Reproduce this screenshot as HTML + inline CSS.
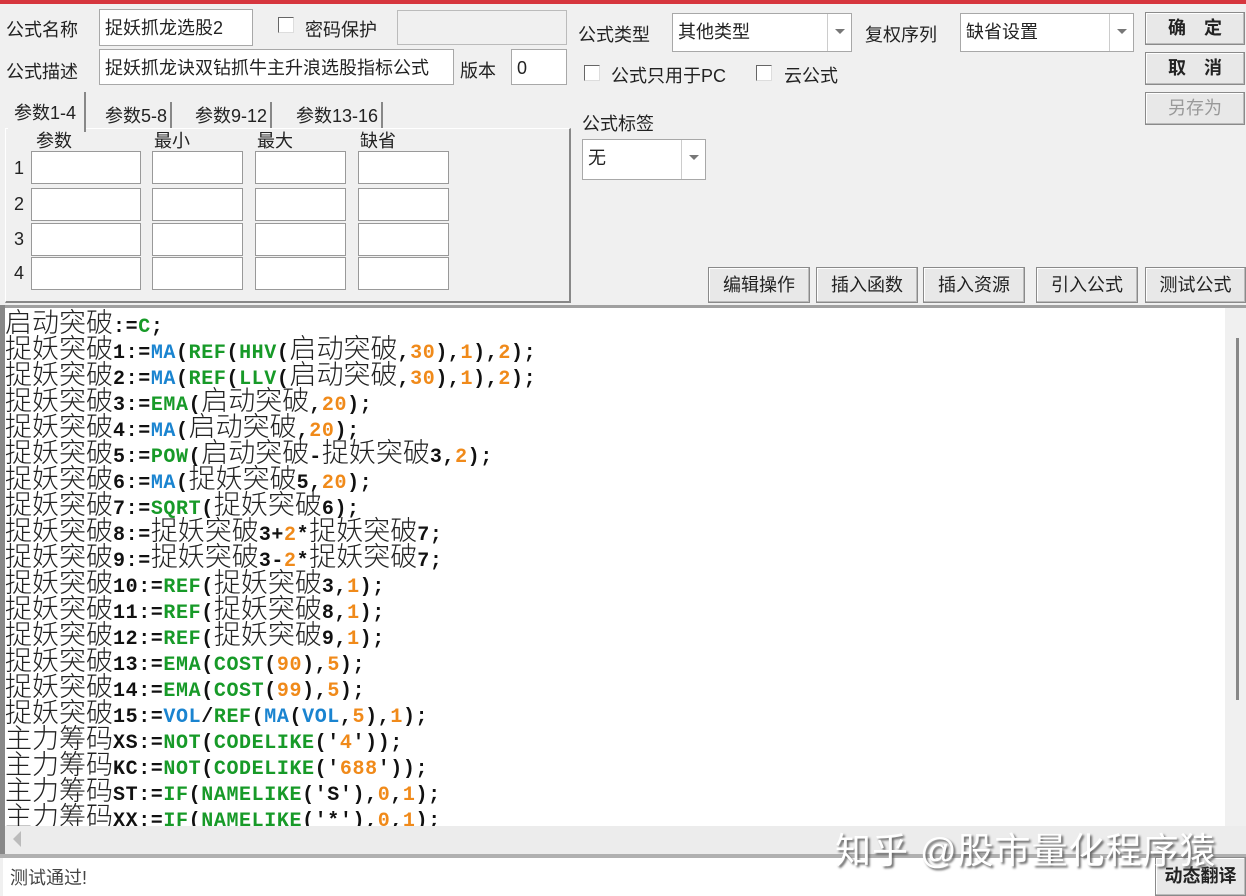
<!DOCTYPE html>
<html><head><meta charset="utf-8"><style>
*{margin:0;padding:0;box-sizing:border-box}
body{width:1246px;height:896px;background:#f0f0f0;font-family:"Liberation Sans","Noto Sans CJK SC",sans-serif;font-size:18px;color:#222;position:relative;overflow:hidden}
.a{position:absolute}
.inp{position:absolute;background:#fff;border:1px solid #a8a8a8;font-size:18px;padding:2px 5px;white-space:nowrap;overflow:hidden;line-height:32px}
.lbl{position:absolute;font-size:18px;white-space:nowrap}
.cb{position:absolute;width:16px;height:16px;border:1px solid #666;background:#fff;border-right-color:#ddd;border-bottom-color:#ddd}
.btn{position:absolute;background:#e8e8e8;border:1px solid #8a8a8a;box-shadow:inset -1px -1px 0 #bbb,inset 1px 1px 0 #fff;text-align:center;font-size:18px;white-space:nowrap}
.dd{position:absolute;right:0;top:0;bottom:0;width:24px;border-left:1px solid #ccc}
.dd:after{content:"";position:absolute;left:7px;top:15px;border:5px solid transparent;border-top:5px solid #777}
.cell{position:absolute;background:#fff;border:1px solid #999;height:33px}
#code{position:absolute;left:5px;top:308px;width:1220px;height:518px;background:#fff;overflow:hidden}
.ln{height:26px;line-height:26px;white-space:nowrap;font-size:27px;font-family:"Noto Sans CJK SC",sans-serif;font-weight:300;color:#222}
.ln b{font-family:"Liberation Mono",monospace;font-size:20px;font-weight:bold;letter-spacing:0.6px;color:#111}
.ln .bl{color:#1a84d0}.ln .g{color:#179a28}.ln .o{color:#f08a1a}
</style></head><body>
<div class="a" style="left:0;top:0;width:1246px;height:4px;background:#d6363e"></div>
<div class="lbl" style="left:6px;top:16px">公式名称</div>
<div class="inp" style="left:99px;top:9px;width:154px;height:37px">捉妖抓龙选股2</div>
<div class="cb" style="left:278px;top:17px"></div>
<div class="lbl" style="left:305px;top:16px">密码保护</div>
<div class="a" style="left:397px;top:10px;width:170px;height:35px;border:1px solid #bbb"></div>
<div class="lbl" style="left:6px;top:58px">公式描述</div>
<div class="inp" style="left:99px;top:49px;width:355px;height:36px">捉妖抓龙诀双钻抓牛主升浪选股指标公式</div>
<div class="lbl" style="left:460px;top:57px">版本</div>
<div class="inp" style="left:511px;top:49px;width:56px;height:36px">0</div>
<div class="lbl" style="left:578px;top:21px">公式类型</div>
<div class="inp" style="left:672px;top:13px;width:180px;height:39px">其他类型<div class="dd"></div></div>
<div class="lbl" style="left:865px;top:21px">复权序列</div>
<div class="inp" style="left:960px;top:13px;width:174px;height:39px">缺省设置<div class="dd"></div></div>
<div class="btn" style="left:1145px;top:12px;width:100px;height:33px;line-height:31px;font-weight:bold">确　定</div>
<div class="btn" style="left:1145px;top:52px;width:100px;height:33px;line-height:31px;font-weight:bold">取　消</div>
<div class="btn" style="left:1145px;top:92px;width:100px;height:33px;line-height:31px;color:#999">另存为</div>
<div class="cb" style="left:584px;top:65px"></div>
<div class="lbl" style="left:611px;top:62px">公式只用于PC</div>
<div class="cb" style="left:756px;top:65px"></div>
<div class="lbl" style="left:784px;top:62px">云公式</div>
<div class="lbl" style="left:582px;top:110px">公式标签</div>
<div class="inp" style="left:582px;top:139px;width:124px;height:41px">无<div class="dd"></div></div>
<div class="a" style="left:5px;top:128px;width:566px;height:175px;border:1px solid #fff;border-right:2px solid #888;border-bottom:2px solid #888"></div>
<div class="a" style="left:8px;top:92px;width:78px;height:40px;background:#f0f0f0;border-right:2px solid #888"></div>
<div class="lbl" style="left:14px;top:99px">参数1-4</div>
<div class="lbl" style="left:105px;top:102px;border-right:2px solid #888;padding-right:3px">参数5-8</div>
<div class="lbl" style="left:195px;top:102px;border-right:2px solid #888;padding-right:3px">参数9-12</div>
<div class="lbl" style="left:296px;top:102px;border-right:2px solid #888;padding-right:3px">参数13-16</div>
<div class="lbl" style="left:36px;top:127px">参数</div>
<div class="lbl" style="left:154px;top:127px">最小</div>
<div class="lbl" style="left:257px;top:127px">最大</div>
<div class="lbl" style="left:360px;top:127px">缺省</div>
<div class="lbl" style="left:14px;top:158px">1</div><div class="lbl" style="left:14px;top:194px">2</div><div class="lbl" style="left:14px;top:229px">3</div><div class="lbl" style="left:14px;top:263px">4</div>
<div class="cell" style="left:31px;top:151px;width:110px"></div><div class="cell" style="left:152px;top:151px;width:91px"></div><div class="cell" style="left:255px;top:151px;width:91px"></div><div class="cell" style="left:358px;top:151px;width:91px"></div>
<div class="cell" style="left:31px;top:188px;width:110px"></div><div class="cell" style="left:152px;top:188px;width:91px"></div><div class="cell" style="left:255px;top:188px;width:91px"></div><div class="cell" style="left:358px;top:188px;width:91px"></div>
<div class="cell" style="left:31px;top:223px;width:110px"></div><div class="cell" style="left:152px;top:223px;width:91px"></div><div class="cell" style="left:255px;top:223px;width:91px"></div><div class="cell" style="left:358px;top:223px;width:91px"></div>
<div class="cell" style="left:31px;top:257px;width:110px"></div><div class="cell" style="left:152px;top:257px;width:91px"></div><div class="cell" style="left:255px;top:257px;width:91px"></div><div class="cell" style="left:358px;top:257px;width:91px"></div>
<div class="btn" style="left:708px;top:267px;width:102px;height:36px;line-height:34px">编辑操作</div>
<div class="btn" style="left:816px;top:267px;width:102px;height:36px;line-height:34px">插入函数</div>
<div class="btn" style="left:923px;top:267px;width:102px;height:36px;line-height:34px">插入资源</div>
<div class="btn" style="left:1036px;top:267px;width:102px;height:36px;line-height:34px">引入公式</div>
<div class="btn" style="left:1145px;top:267px;width:101px;height:36px;line-height:34px">测试公式</div>
<div class="a" style="left:0;top:305px;width:1246px;height:3px;background:#a0a0a0"></div>
<div class="a" style="left:0;top:305px;width:5px;height:552px;background:#888"></div>
<div id="code">
<div class="ln">启动突破<b>:=</b><b class="g">C</b><b>;</b></div>
<div class="ln">捉妖突破<b>1:=</b><b class="bl">MA</b><b>(</b><b class="g">REF</b><b>(</b><b class="g">HHV</b><b>(</b>启动突破<b>,</b><b class="o">30</b><b>),</b><b class="o">1</b><b>),</b><b class="o">2</b><b>);</b></div>
<div class="ln">捉妖突破<b>2:=</b><b class="bl">MA</b><b>(</b><b class="g">REF</b><b>(</b><b class="g">LLV</b><b>(</b>启动突破<b>,</b><b class="o">30</b><b>),</b><b class="o">1</b><b>),</b><b class="o">2</b><b>);</b></div>
<div class="ln">捉妖突破<b>3:=</b><b class="g">EMA</b><b>(</b>启动突破<b>,</b><b class="o">20</b><b>);</b></div>
<div class="ln">捉妖突破<b>4:=</b><b class="bl">MA</b><b>(</b>启动突破<b>,</b><b class="o">20</b><b>);</b></div>
<div class="ln">捉妖突破<b>5:=</b><b class="g">POW</b><b>(</b>启动突破<b>-</b>捉妖突破<b>3,</b><b class="o">2</b><b>);</b></div>
<div class="ln">捉妖突破<b>6:=</b><b class="bl">MA</b><b>(</b>捉妖突破<b>5,</b><b class="o">20</b><b>);</b></div>
<div class="ln">捉妖突破<b>7:=</b><b class="g">SQRT</b><b>(</b>捉妖突破<b>6);</b></div>
<div class="ln">捉妖突破<b>8:=</b>捉妖突破<b>3+</b><b class="o">2</b><b>*</b>捉妖突破<b>7;</b></div>
<div class="ln">捉妖突破<b>9:=</b>捉妖突破<b>3-</b><b class="o">2</b><b>*</b>捉妖突破<b>7;</b></div>
<div class="ln">捉妖突破<b>10:=</b><b class="g">REF</b><b>(</b>捉妖突破<b>3,</b><b class="o">1</b><b>);</b></div>
<div class="ln">捉妖突破<b>11:=</b><b class="g">REF</b><b>(</b>捉妖突破<b>8,</b><b class="o">1</b><b>);</b></div>
<div class="ln">捉妖突破<b>12:=</b><b class="g">REF</b><b>(</b>捉妖突破<b>9,</b><b class="o">1</b><b>);</b></div>
<div class="ln">捉妖突破<b>13:=</b><b class="g">EMA</b><b>(</b><b class="g">COST</b><b>(</b><b class="o">90</b><b>),</b><b class="o">5</b><b>);</b></div>
<div class="ln">捉妖突破<b>14:=</b><b class="g">EMA</b><b>(</b><b class="g">COST</b><b>(</b><b class="o">99</b><b>),</b><b class="o">5</b><b>);</b></div>
<div class="ln">捉妖突破<b>15:=</b><b class="bl">VOL</b><b>/</b><b class="g">REF</b><b>(</b><b class="bl">MA</b><b>(</b><b class="bl">VOL</b><b>,</b><b class="o">5</b><b>),</b><b class="o">1</b><b>);</b></div>
<div class="ln">主力筹码<b>XS:=</b><b class="g">NOT</b><b>(</b><b class="g">CODELIKE</b><b>('</b><b class="o">4</b><b>'));</b></div>
<div class="ln">主力筹码<b>KC:=</b><b class="g">NOT</b><b>(</b><b class="g">CODELIKE</b><b>('</b><b class="o">688</b><b>'));</b></div>
<div class="ln">主力筹码<b>ST:=</b><b class="g">IF</b><b>(</b><b class="g">NAMELIKE</b><b>('S'),</b><b class="o">0</b><b>,</b><b class="o">1</b><b>);</b></div>
<div class="ln">主力筹码<b>XX:=</b><b class="g">IF</b><b>(</b><b class="g">NAMELIKE</b><b>('*'),</b><b class="o">0</b><b>,</b><b class="o">1</b><b>);</b></div>
</div>
<div class="a" style="left:1225px;top:308px;width:21px;height:518px;background:#f0f0f0"></div>
<div class="a" style="left:1236px;top:338px;width:3px;height:362px;background:#888"></div>
<div class="a" style="left:5px;top:826px;width:1241px;height:28px;background:#ececec"></div>
<div class="a" style="left:13px;top:831px;border:8px solid transparent;border-right:8px solid #bbb;border-left:0"></div>
<div class="a" style="left:0;top:854px;width:1246px;height:4px;background:#b0b0b0"></div>
<div class="a" style="left:3px;top:858px;width:1243px;height:38px;background:#fff"></div>
<div class="lbl" style="left:10px;top:864px;color:#444">测试通过!</div>
<div class="btn" style="left:1155px;top:857px;width:91px;height:39px;line-height:36px;font-weight:bold">动态翻译</div>
<div class="lbl" style="left:835px;top:822px;font-size:36px;color:#fff;text-shadow:2px 2px 2px #666;letter-spacing:1px">知乎 @股市量化程序猿</div>
</body></html>
